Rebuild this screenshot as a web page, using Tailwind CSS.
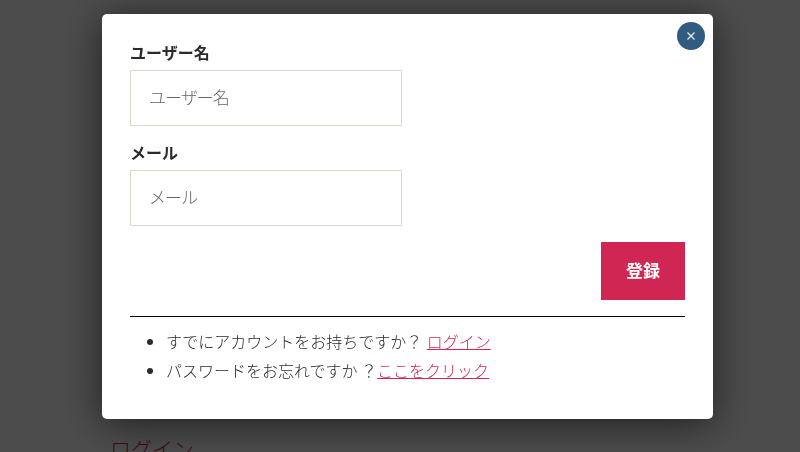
<!DOCTYPE html>
<html lang="ja">
<head>
  <meta charset="UTF-8">
  <title>登録</title>
  <script src="https://cdn.jsdelivr.net/npm/@tailwindcss/browser@4"></script>
</head>
<body class="h-[452px] w-[800px] overflow-hidden bg-white font-['Noto_Sans_CJK_JP',sans-serif]">
  <!-- page behind the modal -->
  <div class="pl-[110px] pt-[433px]">
    <a href="#" class="text-[21px] leading-[30px] font-light text-[#cf2654]">ログイン</a>
  </div>

  <!-- overlay -->
  <div class="fixed inset-0 bg-black/70">
    <div class="relative ml-[102px] mt-[14px] h-[405px] w-[611px] rounded-[5px] bg-white px-[28px] pt-[26px] shadow-[0_5px_40px_rgba(0,0,0,0.6)]">
      <button class="absolute right-[8px] top-[8px] flex h-[28px] w-[28px] items-center justify-center rounded-full bg-[#315c80]">
        <svg width="10" height="10" viewBox="0 0 10 10" fill="none" stroke="#e6edf2" stroke-width="1.3"><path d="M1.5 1.5l7 7M8.5 1.5l-7 7"/></svg>
      </button>

      <form>
        <label class="block text-[16px] leading-[24px] font-bold text-[#2b2b2b]">ユーザー名</label>
        <input type="text" placeholder="ユーザー名" class="mt-[6px] block h-[56px] w-[272px] border border-[#dcd8ca] px-[18px] pb-[3px] text-[17px] tracking-[-1px] font-light placeholder:text-[#666]">

        <label class="mt-[14px] block text-[16px] leading-[24px] font-bold text-[#2b2b2b]">メール</label>
        <input type="email" placeholder="メール" class="mt-[6px] block h-[56px] w-[272px] border border-[#dcd8ca] px-[18px] pb-[3px] text-[17px] tracking-[-1px] font-light placeholder:text-[#666]">

        <div class="mt-[16px] flex justify-end">
          <button type="button" class="h-[58px] w-[84px] bg-[#cf2654] pb-[2px] text-[17px] font-bold text-white">登録</button>
        </div>
      </form>

      <div class="mt-[16px] border-t border-black pt-[10px]">
        <ul class="list-disc pl-[36px] text-[16px] leading-[29px] font-light text-[#2b2b2b]">
          <li>すでにアカウントをお持ちですか？ <a href="#" class="ml-[1px] text-[#cf2654] underline">ログイン</a></li>
          <li>パスワードをお忘れですか ？<a href="#" class="text-[#cf2654] underline">ここをクリック</a></li>
        </ul>
      </div>
    </div>
  </div>
</body>
</html>
